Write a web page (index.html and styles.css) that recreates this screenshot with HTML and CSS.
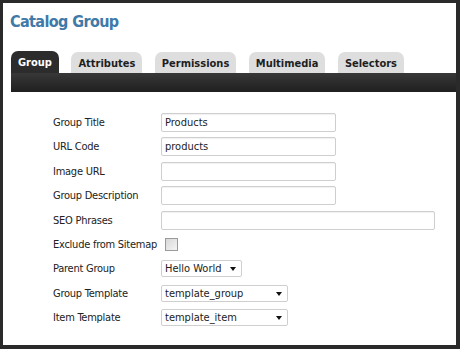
FILE: index.html
```html
<!DOCTYPE html>
<html>
<head>
<meta charset="utf-8">
<link rel="stylesheet" href="styles.css">
</head>
<body>
<div class="frame">
  <h1 class="title">Catalog Group</h1>
  <div class="tabs">
    <span class="tab active">Group</span>
    <span class="tab">Attributes</span>
    <span class="tab">Permissions</span>
    <span class="tab">Multimedia</span>
    <span class="tab">Selectors</span>
  </div>
  <div class="bar"></div>
  <form class="form">
    <label class="lbl">Group Title</label>
    <input class="txt" type="text" value="Products">
    <label class="lbl">URL Code</label>
    <input class="txt" type="text" value="products">
    <label class="lbl">Image URL</label>
    <input class="txt" type="text" value="">
    <label class="lbl">Group Description</label>
    <input class="txt" type="text" value="">
    <label class="lbl">SEO Phrases</label>
    <input class="txt wide" type="text" value="">
    <label class="lbl">Exclude from Sitemap</label>
    <span class="cell"><input class="chk" type="checkbox"></span>
    <label class="lbl">Parent Group</label>
    <span class="cell"><span class="sel s1"><select><option>Hello World</option></select></span></span>
    <label class="lbl">Group Template</label>
    <span class="cell"><span class="sel s2"><select><option>template_group</option></select></span></span>
    <label class="lbl">Item Template</label>
    <span class="cell"><span class="sel s2"><select><option>template_item</option></select></span></span>
  </form>
</div>
</body>
</html>
```

FILE: styles.css
```css
html, body {
  margin: 0;
  padding: 0;
  background: #2a2a2a;
}
.frame {
  margin: 3px 4px 0 3px;
  height: 342px;
  background: #fff;
  overflow: hidden;
  font-family: "DejaVu Sans Condensed", "DejaVu Sans", sans-serif;
  color: #222;
}
.title {
  margin: 0;
  padding: 9px 0 0 7px;
  height: 39px;
  box-sizing: border-box;
  font-size: 16px;
  line-height: 20px;
  font-weight: bold;
  letter-spacing: -0.6px;
  color: #3f7aa8;
}
.tabs {
  display: flex;
  gap: 12.5px;
  padding-left: 8px;
  margin-top: 9px;
  height: 22px;
  align-items: flex-end;
}
.tab {
  height: 21px;
  box-sizing: border-box;
  padding: 0 7px;
  border-radius: 7px 7px 0 0;
  background: #dedede;
  font-size: 11px;
  font-weight: bold;
  line-height: 23px;
  color: #1e1e1e;
}
.tab.active {
  height: 22px;
  background: #2c2c2c;
  color: #fff;
  padding: 0 7px;
}
.bar {
  margin-left: 8px;
  height: 19px;
  background: linear-gradient(#383838, #1f1f1f);
}
.form {
  display: grid;
  grid-template-columns: 108px auto;
  grid-template-rows: repeat(5, 24.5px) 23px 26px 24px 24px;
  align-items: center;
  justify-items: start;
  padding: 18px 0 0 50px;
  margin: 0;
}
.lbl {
  font-size: 11px;
  letter-spacing: -0.25px;
  white-space: nowrap;
  color: #222;
}
.txt {
  width: 175px;
  height: 19px;
  box-sizing: border-box;
  border: 1px solid #cfcfcf;
  border-radius: 2px;
  box-shadow: inset 0 1px 1px rgba(0,0,0,0.06);
  padding: 0 4px 0 3px;
  font-family: inherit;
  font-size: 11px;
  color: #222;
  background: #fff;
}
.txt.wide {
  width: 274px;
}
.cell {
  display: flex;
  align-items: center;
}
.chk {
  appearance: none;
  -webkit-appearance: none;
  margin: 0 0 0 4px;
  width: 13px;
  height: 13px;
  box-sizing: border-box;
  border: 1px solid #9a9a9a;
  background: linear-gradient(135deg, #d8d8d8, #f4f4f4);
}
.sel {
  position: relative;
  display: inline-block;
}
.sel select {
  appearance: none;
  -webkit-appearance: none;
  height: 17px;
  box-sizing: border-box;
  border: 1px solid #cfcfcf;
  border-radius: 2px;
  background: #fff;
  padding: 0 3px;
  font-family: inherit;
  font-size: 11px;
  color: #222;
  display: block;
}
.s1 select { width: 81px; }
.s2 select { width: 127px; }
.sel::after {
  content: "";
  position: absolute;
  right: 6px;
  top: 7px;
  border-left: 3.5px solid transparent;
  border-right: 3.5px solid transparent;
  border-top: 4px solid #111;
  pointer-events: none;
}
```
